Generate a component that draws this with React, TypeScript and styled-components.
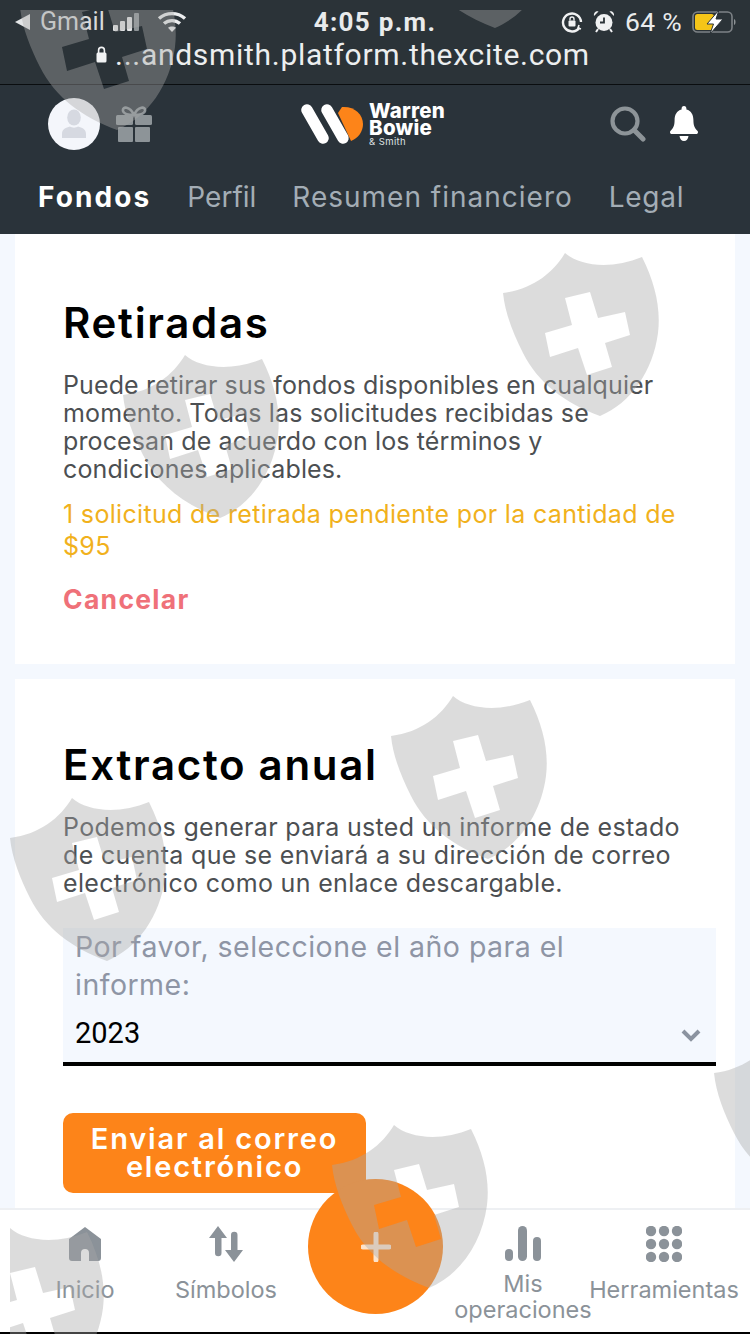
import React from "react";
import styled, { createGlobalStyle } from "styled-components";

const FONT = `Inter, "Open Sans", "Liberation Sans", sans-serif`;

const Global = createGlobalStyle`
  html, body { margin: 0; padding: 0; background: #f4f8fe; }
  * { box-sizing: border-box; }
`;

const Page = styled.div`
  position: relative;
  width: 750px;
  height: 1334px;
  overflow: hidden;
  display: flex;
  flex-direction: column;
  background: #f4f8fe;
  font-family: ${FONT};
`;

const StatusBar = styled.div`
  height: 85px;
  background: #2b3338;
  border-bottom: 1px solid #0a0d0f;
  color: #e9ebec;
  padding-top: 6px;
  flex: none;
`;
const StatusRow = styled.div`
  height: 28px;
  display: grid;
  grid-template-columns: 1fr 1fr 1fr;
  align-items: center;
`;
const StatusLeft = styled.div`
  display: flex;
  align-items: center;
  padding-left: 14px;
  font: 400 25px "Roboto", sans-serif;
  color: #d8dadb;
`;
const Carrier = styled.span`
  margin: 0 7px 0 10px;
`;
const WifiGap = styled.span`
  width: 16px;
`;
const StatusTime = styled.div`
  text-align: center;
  font: 700 26px "Roboto", sans-serif;
  letter-spacing: 1.3px;
`;
const StatusRight = styled.div`
  display: flex;
  align-items: center;
  justify-content: flex-end;
  gap: 10px;
  padding-right: 12px;
  font: 400 26.5px "Roboto", sans-serif;
  letter-spacing: 0.3px;
`;
const UrlRow = styled.div`
  height: 40px;
  display: flex;
  align-items: center;
  justify-content: center;
  gap: 8px;
  padding-right: 64px;
  font: 400 30px "Roboto", sans-serif;
  letter-spacing: 0.7px;
  color: #eceeef;
`;

const Header = styled.header`
  flex: none;
  height: 149px;
  background: #2a333a;
  color: #fff;
  padding-top: 13px;
`;
const TopRow = styled.div`
  height: 52px;
  display: grid;
  grid-template-columns: 1fr auto 1fr;
  align-items: center;
  padding: 0 52px 0 48px;
`;
const LeftIcons = styled.div`
  display: flex;
  align-items: center;
  gap: 16px;
`;
const RightIcons = styled.div`
  display: flex;
  align-items: center;
  justify-content: flex-end;
  gap: 24px;
`;
const Avatar = styled.div`
  width: 52px;
  height: 52px;
  border-radius: 50%;
  background: #f4f6fb;
  display: flex;
  align-items: center;
  justify-content: center;
`;
const Logo = styled.div`
  display: flex;
  align-items: center;
  gap: 6px;
  margin-left: -1px;
`;
const LogoText = styled.div`
  display: flex;
  flex-direction: column;
  font-weight: 800;
  font-size: 20.5px;
  line-height: 17px;
  color: #fff;
  letter-spacing: 0.2px;
`;
const LogoSub = styled.span`
  font-size: 9.5px;
  font-weight: 400;
  line-height: 11px;
  letter-spacing: 0.4px;
  color: #dfe2e3;
`;
const Tabs = styled.nav`
  margin-top: 27px;
  height: 40px;
  padding-left: 38px;
  display: flex;
  align-items: center;
  gap: 36px;
`;
const Tab = styled.span<{ $active?: boolean; $spacing: number }>`
  font-size: 28px;
  font-weight: ${(p) => (p.$active ? 700 : 400)};
  color: ${(p) => (p.$active ? "#ffffff" : "#a3adb5")};
  letter-spacing: ${(p) => p.$spacing}px;
`;

const Main = styled.main`
  flex: 1;
  min-height: 0;
  overflow: hidden;
  display: flex;
  flex-direction: column;
  gap: 15px;
  padding: 0 15px;
`;
const Card = styled.section<{ $top: number; $bottom: number }>`
  flex: none;
  background: #fff;
  padding: ${(p) => p.$top}px 19px ${(p) => p.$bottom}px 48px;
`;
const Title = styled.h2`
  margin: 0;
  font-size: 42px;
  line-height: 48px;
  font-weight: 600;
  color: #000;
  letter-spacing: 1.7px;
`;
const Body = styled.p<{ $spacing: number }>`
  margin: 24px 0 0;
  max-width: 627px;
  font-size: 25px;
  line-height: 28px;
  color: #4c4f52;
  letter-spacing: ${(p) => p.$spacing}px;
`;
const Pending = styled.p`
  margin: 15px 0 0;
  max-width: 627px;
  font-size: 25px;
  line-height: 32px;
  color: #f1b11c;
  letter-spacing: 0.33px;
`;
const CancelLink = styled.a`
  display: block;
  margin-top: 22px;
  font-size: 26.5px;
  line-height: 30px;
  font-weight: 700;
  color: #ef7179;
  letter-spacing: 1.3px;
`;
const SelectBox = styled.div`
  margin-top: 31px;
  background: #f4f8fe;
  border-bottom: 4px solid #000;
`;
const SelectLabel = styled.label`
  display: block;
  padding: 0 60px 0 12px;
  font-size: 28.5px;
  line-height: 38px;
  letter-spacing: 0.48px;
  color: #8e95a5;
`;
const SelectValue = styled.div`
  margin-top: 12px;
  padding: 0 15px 12px 12px;
  display: flex;
  align-items: center;
  justify-content: space-between;
  font: 400 29px/34px "Roboto", sans-serif;
  color: #000;
`;
const ChevronSlot = styled.span`
  display: flex;
  margin-top: 4px;
`;
const SendButton = styled.button`
  display: block;
  margin-top: 47px;
  width: 303px;
  height: 80px;
  border: 0;
  border-radius: 10px;
  background: #fd8419;
  color: #fff;
  font-family: ${FONT};
  font-size: 29px;
  line-height: 28px;
  font-weight: 600;
  letter-spacing: 1.8px;
  text-align: center;
  padding: 0 20px;
`;

const BottomNav = styled.nav`
  position: relative;
  flex: none;
  height: 126px;
  background: #fff;
  border-top: 2px solid #eef0f3;
  border-bottom: 2px solid #000;
  display: grid;
  grid-template-columns: 170px 112px 186px 110px 172px;
`;
const NavItem = styled.div`
  display: flex;
  flex-direction: column;
  align-items: center;
  padding-top: 15px;
  color: #8b9299;
`;
const NavIcon = styled.div`
  height: 38px;
  display: flex;
  align-items: center;
  justify-content: center;
`;
const NavLabel = styled.span<{ $wrap?: boolean }>`
  margin-top: ${(p) => (p.$wrap ? "8px" : "14px")};
  font-size: 23.5px;
  line-height: 26px;
  text-align: center;
  white-space: ${(p) => (p.$wrap ? "normal" : "nowrap")};
  width: ${(p) => (p.$wrap ? "140px" : "auto")};
`;
const Fab = styled.button`
  position: absolute;
  left: 308px;
  top: -31px;
  width: 135px;
  height: 135px;
  border-radius: 50%;
  border: 0;
  background: #fd8419;
  display: flex;
  align-items: center;
  justify-content: center;
`;

const WatermarkLayer = styled.div`
  position: absolute;
  inset: 10px 0 0 0;
  overflow: hidden;
  pointer-events: none;
`;
const ShieldSvg = styled.svg<{ $x: number; $y: number; $clipLeft: number }>`
  position: absolute;
  left: ${(p) => p.$x}px;
  top: ${(p) => p.$y - 10}px;
  width: 158px;
  height: 165px;
  clip-path: inset(0 0 0 ${(p) => p.$clipLeft}px);
`;

const Shield = ({ x, y, clipLeft = 0 }: { x: number; y: number; clipLeft?: number }) => (
  <ShieldSvg $x={x} $y={y} $clipLeft={clipLeft} viewBox="0 0 158 165">
    <path
      fillRule="evenodd"
      fill="rgba(167,167,167,0.4)"
      d="M62 0C78 14 110 16 139 4C152 30 158 55 155 80C150 118 128 150 97 163C62 150 35 130 20 100C10 80 2 60 0 40C30 36 50 20 62 0ZM62 45L87 39L95 65L122 59L127 82L102 90L109 114L84 122L75 95L47 104L42 80L69 72Z"
    />
  </ShieldSvg>
);

const shields: { x: number; y: number; clipLeft?: number }[] = [
  { x: 20, y: -33 },
  { x: 398, y: -135 },
  { x: 503, y: 253 },
  { x: 123, y: 355 },
  { x: 391, y: 696 },
  { x: 10, y: 798 },
  { x: 714, y: 1033 },
  { x: 332, y: 1125 },
  { x: -52, y: 1228, clipLeft: 62 },
];

const tabs: { label: string; spacing: number; active?: boolean }[] = [
  { label: "Fondos", spacing: 2.1, active: true },
  { label: "Perfil", spacing: 0 },
  { label: "Resumen financiero", spacing: 1 },
  { label: "Legal", spacing: 0.7 },
];

const BarsIcon = () => (
  <svg width="29" height="20" viewBox="0 0 29 20">
    <rect x="1" y="13" width="5" height="6" rx="1" fill="#e4e6e7" />
    <rect x="8" y="9" width="5" height="10" rx="1" fill="#e4e6e7" />
    <rect x="15" y="5" width="5" height="14" rx="1" fill="#e4e6e7" />
    <rect x="22" y="1" width="5" height="18" rx="1" fill="#8d9396" />
  </svg>
);
const WifiIcon = () => (
  <svg width="30" height="22" viewBox="0 0 30 22" fill="none" stroke="#eceeef" strokeWidth="3.4">
    <path d="M2 7.5C9.5 1 20.5 1 28 7.5" />
    <path d="M7 12.5C11.5 8.6 18.5 8.6 23 12.5" />
    <path d="M15 21L11 16.8C13.2 15 16.8 15 19 16.8Z" fill="#eceeef" stroke="none" />
  </svg>
);
const LockRot = () => (
  <svg width="22" height="22" viewBox="0 0 22 22" fill="none" stroke="#f0f1f2" strokeWidth="2.4">
    <path d="M18.5 16.5A9 9 0 1 1 20 11" />
    <path d="M20 18l-3-1 1-3" strokeWidth="1.6" />
    <rect x="7.5" y="9.5" width="7" height="6" rx="1" fill="#f0f1f2" stroke="none" />
    <path d="M9 9.5V8a2 2 0 0 1 4 0v1.5" strokeWidth="1.4" />
  </svg>
);
const AlarmIcon = () => (
  <svg width="22" height="23" viewBox="0 0 22 23">
    <circle cx="11" cy="12.5" r="8.5" fill="#f0f1f2" />
    <path d="M11 7.5V12.5H7" stroke="#2b3338" strokeWidth="1.8" fill="none" />
    <path d="M1 6L5.5 1.5C3 0.8 0.4 2.8 1 6ZM21 6L16.5 1.5C19 0.8 21.6 2.8 21 6Z" fill="#f0f1f2" />
    <path d="M5 19L3 22M17 19L19 22" stroke="#f0f1f2" strokeWidth="2" />
  </svg>
);
const Battery = () => (
  <svg width="46" height="24" viewBox="0 0 46 24">
    <rect x="1" y="2" width="39" height="20" rx="4.5" fill="none" stroke="#7d8286" strokeWidth="1.6" />
    <rect x="3" y="4" width="19" height="16" rx="2.5" fill="#f5c518" />
    <path d="M42 9C44 9.5 44 14.5 42 15Z" fill="#8e9396" />
    <path d="M27 0L15 14H21.5L18 24L31 9H24Z" fill="#fff" stroke="#2b3338" strokeWidth="1" />
  </svg>
);
const Padlock = () => (
  <svg width="11" height="17" viewBox="0 0 11 17">
    <rect x="0.5" y="6.5" width="10" height="10" rx="1.5" fill="#f2f3f4" />
    <path d="M2.6 7V4.3a2.9 2.9 0 0 1 5.8 0V7" fill="none" stroke="#f2f3f4" strokeWidth="1.6" />
  </svg>
);
const UserIcon = () => (
  <svg width="26" height="30" viewBox="0 0 26 30" fill="#d6d9e1">
    <ellipse cx="13" cy="8.5" rx="6.8" ry="8" />
    <path d="M1 29V25C1 20 5 18.5 9 17.5C11 19 15 19 17 17.5C21 18.5 25 20 25 25V29Z" />
  </svg>
);
const GiftIcon = () => (
  <svg width="36" height="36" viewBox="0 0 36 36" fill="#8d9498">
    <rect x="0" y="9" width="17" height="10" rx="1.5" />
    <rect x="19" y="9" width="17" height="10" rx="1.5" />
    <rect x="2" y="21" width="15" height="15" rx="1" />
    <rect x="19" y="21" width="15" height="15" rx="1" />
    <path d="M18 9C14 0 6 0 7 5C7.6 8 13 9 18 9C23 9 28.4 8 29 5C30 0 22 0 18 9Z" fill="none" stroke="#8d9498" strokeWidth="2.6" />
  </svg>
);
const SearchIcon = () => (
  <svg width="36" height="36" viewBox="0 0 36 36" fill="none" stroke="#8d9498">
    <circle cx="15" cy="15" r="12.5" strokeWidth="4.2" />
    <path d="M24 24L33 33" strokeWidth="5" strokeLinecap="round" />
  </svg>
);
const BellIcon = () => (
  <svg width="28" height="36" viewBox="0 0 28 36" fill="#fff">
    <path d="M14 0C15.8 0 16.6 1.4 16.4 3.4C21.4 4.6 23.4 9 23.4 14C23.4 20 25 22.6 27.6 25C28.4 26 28 28 26 28H2C0 28 -0.4 26 0.4 25C3 22.6 4.6 20 4.6 14C4.6 9 6.6 4.6 11.6 3.4C11.4 1.4 12.2 0 14 0Z" />
    <path d="M9.5 30H18.5C18.2 33 16.4 35 14 35C11.6 35 9.8 33 9.5 30Z" />
  </svg>
);
const LogoMark = () => (
  <svg width="63" height="44" viewBox="0 0 63 44">
    <path d="M42 5C54 4 63 12 63 22C63 30 58 36 51 39L38 11Z" fill="#fd8419" />
    <path d="M7 8L23 36" stroke="#fff" strokeWidth="11.5" strokeLinecap="round" />
    <path d="M27 8L43 36" stroke="#fff" strokeWidth="11.5" strokeLinecap="round" />
  </svg>
);
const Chevron = () => (
  <svg width="20" height="14" viewBox="0 0 20 14" fill="none" stroke="#8b93a0" strokeWidth="4">
    <path d="M2 3L10 11L18 3" />
  </svg>
);
const HomeIcon = () => (
  <svg width="34" height="36" viewBox="0 0 34 36" fill="#8b9299">
    <path d="M17 1L33 13V32A3 3 0 0 1 30 35H21V27A4 4 0 0 0 13 27V35H4A3 3 0 0 1 1 32V13Z" />
  </svg>
);
const ArrowsIcon = () => (
  <svg width="36" height="36" viewBox="0 0 36 36" fill="#8b9299">
    <path d="M10 0L19 12H13.5V27A3 3 0 0 1 7 27V12H1Z" />
    <path d="M26 36L35 24H29.5V9A3 3 0 0 0 23 9V24H17Z" />
  </svg>
);
const ChartIcon = () => (
  <svg width="36" height="36" viewBox="0 0 36 36" fill="#8b9299">
    <rect x="0" y="23" width="8" height="12" rx="4" />
    <rect x="13" y="0" width="9" height="35" rx="4.5" />
    <rect x="28" y="11" width="8" height="24" rx="4" />
  </svg>
);
const DotsIcon = () => (
  <svg width="36" height="36" viewBox="0 0 36 36" fill="#8b9299">
    {[5, 18, 31].flatMap((cy) =>
      [5, 18, 31].map((cx) => <circle key={`${cx}-${cy}`} cx={cx} cy={cy} r="5.2" />)
    )}
  </svg>
);
const PlusIcon = () => (
  <svg width="30" height="30" viewBox="0 0 30 30" stroke="#fde3cb" strokeWidth="5" strokeLinecap="round">
    <path d="M15 2V28M2 15H28" />
  </svg>
);

export default function App() {
  return (
    <Page>
      <Global />
      <StatusBar>
        <StatusRow>
          <StatusLeft>
            <svg width="16" height="18" viewBox="0 0 16 18"><path d="M16 1V17L1 9Z" fill="#e4e6e7" /></svg>
            <Carrier>Gmail</Carrier>
            <BarsIcon />
            <WifiGap />
            <WifiIcon />
          </StatusLeft>
          <StatusTime>4:05 p.m.</StatusTime>
          <StatusRight>
            <LockRot />
            <AlarmIcon />
            <span>64 %</span>
            <Battery />
          </StatusRight>
        </StatusRow>
        <UrlRow>
          <Padlock />
          <span>...andsmith.platform.thexcite.com</span>
        </UrlRow>
      </StatusBar>

      <Header>
        <TopRow>
          <LeftIcons>
            <Avatar><UserIcon /></Avatar>
            <GiftIcon />
          </LeftIcons>
          <Logo>
            <LogoMark />
            <LogoText>
              <span>Warren</span>
              <span>Bowie</span>
              <LogoSub>&amp; Smith</LogoSub>
            </LogoText>
          </Logo>
          <RightIcons>
            <SearchIcon />
            <BellIcon />
          </RightIcons>
        </TopRow>
        <Tabs>
          {tabs.map((t) => (
            <Tab key={t.label} $active={t.active} $spacing={t.spacing}>{t.label}</Tab>
          ))}
        </Tabs>
      </Header>

      <Main>
        <Card $top={65} $bottom={50}>
          <Title>Retiradas</Title>
          <Body $spacing={0.12}>
            Puede retirar sus fondos disponibles en cualquier momento. Todas las solicitudes recibidas se procesan de
            acuerdo con los términos y condiciones aplicables.
          </Body>
          <Pending>1 solicitud de retirada pendiente por la cantidad de $95</Pending>
          <CancelLink>Cancelar</CancelLink>
        </Card>
        <Card $top={62} $bottom={20}>
          <Title>Extracto anual</Title>
          <Body $spacing={0.33}>
            Podemos generar para usted un informe de estado de cuenta que se enviará a su dirección de correo
            electrónico como un enlace descargable.
          </Body>
          <SelectBox>
            <SelectLabel>Por favor, seleccione el año para el informe:</SelectLabel>
            <SelectValue>
              <span>2023</span>
              <ChevronSlot><Chevron /></ChevronSlot>
            </SelectValue>
          </SelectBox>
          <SendButton>Enviar al correo electrónico</SendButton>
        </Card>
      </Main>

      <BottomNav>
        <NavItem>
          <NavIcon><HomeIcon /></NavIcon>
          <NavLabel>Inicio</NavLabel>
        </NavItem>
        <NavItem>
          <NavIcon><ArrowsIcon /></NavIcon>
          <NavLabel>Símbolos</NavLabel>
        </NavItem>
        <div />
        <NavItem>
          <NavIcon><ChartIcon /></NavIcon>
          <NavLabel $wrap>Mis operaciones</NavLabel>
        </NavItem>
        <NavItem>
          <NavIcon><DotsIcon /></NavIcon>
          <NavLabel>Herramientas</NavLabel>
        </NavItem>
        <Fab aria-label="Añadir"><PlusIcon /></Fab>
      </BottomNav>

      <WatermarkLayer>
        {shields.map((s) => (
          <Shield key={`${s.x}-${s.y}`} x={s.x} y={s.y} clipLeft={s.clipLeft} />
        ))}
      </WatermarkLayer>
    </Page>
  );
}
